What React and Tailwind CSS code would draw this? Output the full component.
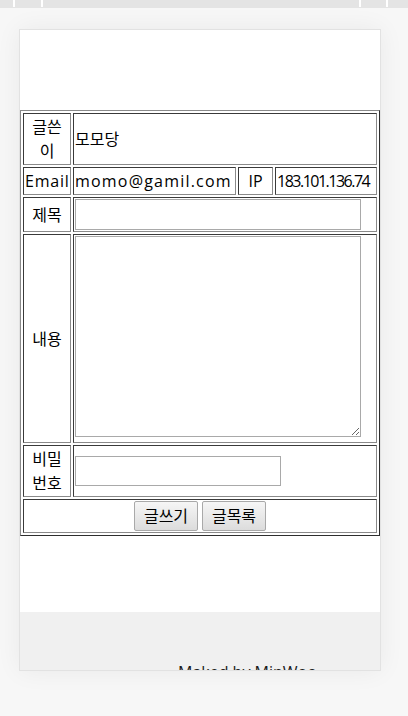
const cell =
  "border border-solid border-t-[#3a3a3a] border-l-[#3a3a3a] border-r-[#8a8a8a] border-b-[#8a8a8a] p-px";

export default function App() {
  return (
    <div className="min-h-[716px] bg-[#f7f7f7] font-['Open_Sans','Noto_Sans_CJK_KR',sans-serif] text-[16px] leading-[24px] text-black">
      <div className="flex h-[8px] bg-[#e4e4e4]">
        <div className="ml-[13px] h-[7px] w-[2px] bg-white" />
        <div className="ml-[26px] h-[7px] w-[2px] bg-white" />
        <div className="ml-[316px] h-[7px] w-[2px] bg-white" />
        <div className="ml-[25px] h-[7px] w-[2px] bg-white" />
      </div>
      <div className="ml-[19px] mt-[21px] flex h-[642px] w-[362px] flex-col overflow-hidden border border-[#e2e2e2] bg-white shadow-[0_0_24px_rgba(0,0,0,0.06)]">
        <div className="h-[80px] shrink-0" />
        <table className="w-[360px] table-fixed border-separate border-spacing-[2px] border border-solid border-t-[#8a8a8a] border-l-[#8a8a8a] border-r-[#2e2e2e] border-b-[#2e2e2e]">
          <colgroup>
            <col className="w-[48px]" />
            <col className="w-[163px]" />
            <col className="w-[35px]" />
            <col className="w-[102px]" />
          </colgroup>
          <tbody>
            <tr>
              <td className={cell + " text-center"}>글쓴이</td>
              <td colSpan={3} className={cell}>
                모모당
              </td>
            </tr>
            <tr>
              <td className={cell + " text-center tracking-[0.8px]"}>Email</td>
              <td className={cell + " whitespace-nowrap tracking-[1.2px]"}>momo@gamil.com</td>
              <td className={cell + " text-center"}>IP</td>
              <td className={cell + " whitespace-nowrap tracking-[-1.5px]"}>183.101.136.74</td>
            </tr>
            <tr>
              <td className={cell + " text-center"}>제목</td>
              <td colSpan={3} className={cell}>
                <input
                  type="text"
                  className="block h-[31px] w-[286px] border border-[#a9a9a9] bg-white"
                />
              </td>
            </tr>
            <tr>
              <td className={cell + " text-center"}>내용</td>
              <td colSpan={3} className={cell}>
                <textarea className="mb-[4px] block h-[201px] w-[286px] border border-[#a9a9a9] bg-white" />
              </td>
            </tr>
            <tr>
              <td className={cell + " text-center"}>비밀번호</td>
              <td colSpan={3} className={cell}>
                <input
                  type="password"
                  className="block h-[30px] w-[206px] border border-[#a9a9a9] bg-white"
                />
              </td>
            </tr>
            <tr>
              <td colSpan={4} className={cell}>
                <div className="flex justify-center gap-[4px]">
                  <button className="h-[30px] w-[64px] rounded-[2px] border border-[#a9a9a9] bg-linear-to-b from-[#f6f6f6] to-[#dcdcdc] text-[16px]">
                    글쓰기
                  </button>
                  <button className="h-[30px] w-[64px] rounded-[2px] border border-[#a9a9a9] bg-linear-to-b from-[#f6f6f6] to-[#dcdcdc] text-[16px]">
                    글목록
                  </button>
                </div>
              </td>
            </tr>
          </tbody>
        </table>
        <div className="flex-1" />
        <div className="h-[58px] shrink-0 bg-[#f0f0f0] pl-[158px] pt-[48px] text-[#1a1a1a]">
          Maked by MinWoo
        </div>
      </div>
    </div>
  );
}
